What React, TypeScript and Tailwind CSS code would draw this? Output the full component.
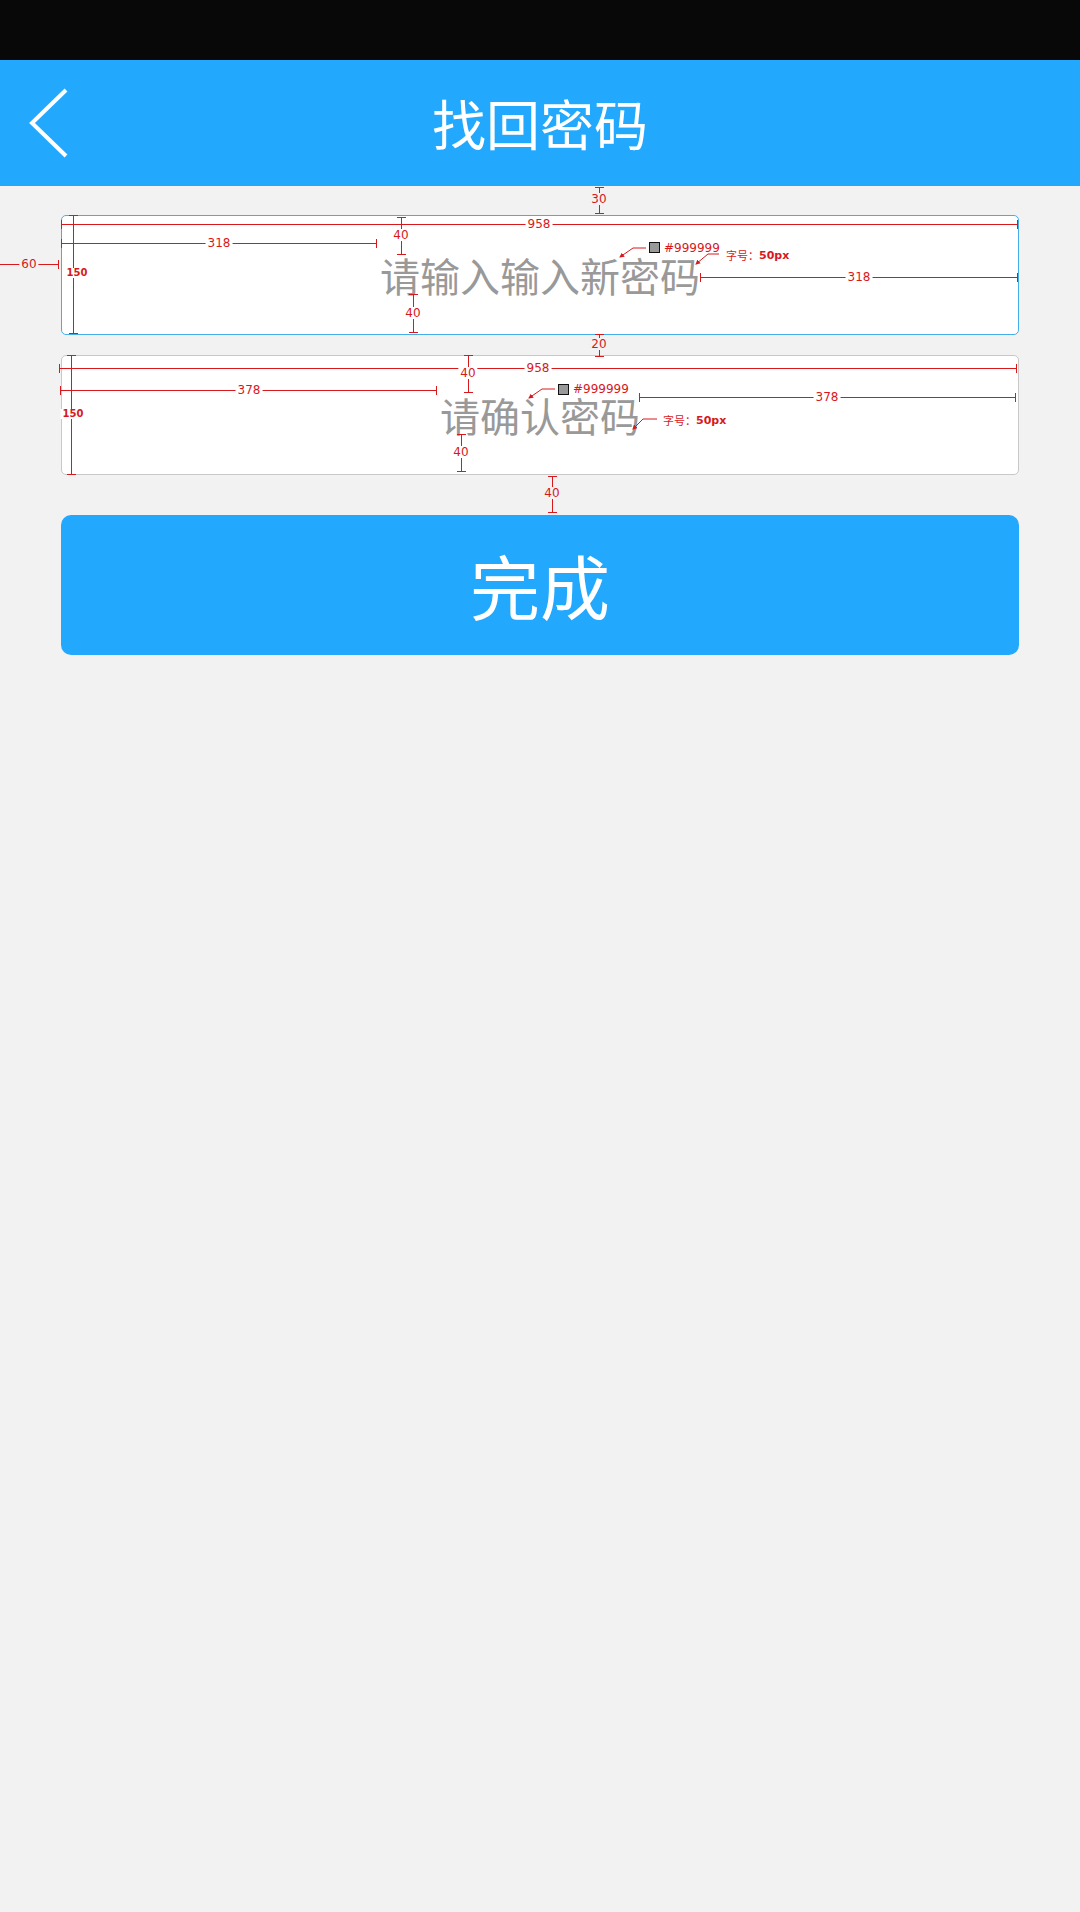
import React from "react";

const RED = "#d7191c";

type Dim = {
  dir: "h" | "v";
  at: number; // y for horizontal, x for vertical
  a: number;
  b: number;
  label: string;
  lx: number;
  ly: number;
  bg: string;
  bold?: boolean;
  startTick?: boolean;
};

const dims: Dim[] = [
  // first field
  { dir: "v", at: 599, a: 187, b: 214, label: "30", lx: 599, ly: 199, bg: "bg-[#f2f2f2]" },
  { dir: "h", at: 224, a: 61, b: 1018, label: "958", lx: 539, ly: 224, bg: "bg-white" },
  { dir: "v", at: 401, a: 217, b: 255, label: "40", lx: 401, ly: 235, bg: "bg-white" },
  { dir: "h", at: 243, a: 61, b: 377, label: "318", lx: 219, ly: 243, bg: "bg-white" },
  { dir: "v", at: 413, a: 294, b: 333, label: "40", lx: 413, ly: 313, bg: "bg-white" },
  { dir: "h", at: 264, a: -10, b: 59, label: "60", lx: 29, ly: 264, bg: "bg-[#f2f2f2]", startTick: false },
  { dir: "v", at: 73, a: 215, b: 334, label: "150", lx: 77, ly: 273, bg: "bg-white", bold: true },
  { dir: "h", at: 277, a: 700, b: 1018, label: "318", lx: 859, ly: 277, bg: "bg-white" },
  { dir: "v", at: 599, a: 334, b: 357, label: "20", lx: 599, ly: 344, bg: "bg-[#f2f2f2]" },
  // second field
  { dir: "h", at: 368, a: 59, b: 1017, label: "958", lx: 538, ly: 368, bg: "bg-white" },
  { dir: "v", at: 468, a: 355, b: 393, label: "40", lx: 468, ly: 373, bg: "bg-white" },
  { dir: "h", at: 390, a: 60, b: 437, label: "378", lx: 249, ly: 390, bg: "bg-white" },
  { dir: "v", at: 461, a: 434, b: 472, label: "40", lx: 461, ly: 452, bg: "bg-white" },
  { dir: "v", at: 71, a: 355, b: 475, label: "150", lx: 73, ly: 414, bg: "bg-white", bold: true },
  { dir: "h", at: 397, a: 639, b: 1016, label: "378", lx: 827, ly: 397, bg: "bg-white" },
  { dir: "v", at: 552, a: 476, b: 513, label: "40", lx: 552, ly: 493, bg: "bg-[#f2f2f2]" },
];

type Callout = {
  sx: number; sy: number; // swatch top-left
  tx: number; ty: number; // text "#999999"
  pts: string; // leader for colour
  fx: number; fy: number; // font-size note
  fpts: string;
};

const callouts: Callout[] = [
  {
    sx: 649, sy: 242, tx: 664, ty: 248, pts: "646,248 633,248 620,257",
    fx: 726, fy: 255, fpts: "719,254 708,254 696,264",
  },
  {
    sx: 558, sy: 384, tx: 573, ty: 389, pts: "555,389 542,389 529,398",
    fx: 663, fy: 420, fpts: "657,419 643,419 633,429",
  },
];

function Annotations() {
  return (
    <div className="pointer-events-none absolute inset-0 font-['DejaVu_Sans',sans-serif]">
      <svg className="absolute left-0 top-0" width={1080} height={700}>
        <defs>
          <marker id="arr" viewBox="0 0 10 10" refX="8" refY="5" markerWidth="5" markerHeight="5" orient="auto">
            <path d="M0 0 L10 5 L0 10 z" fill={RED} />
          </marker>
        </defs>
        {dims.map((d, i) =>
          d.dir === "h" ? (
            <g key={i} stroke={RED} strokeWidth={1}>
              <line x1={d.a} y1={d.at + 0.5} x2={d.b} y2={d.at + 0.5} />
              {d.startTick !== false && <line x1={d.a + 0.5} y1={d.at - 4} x2={d.a + 0.5} y2={d.at + 5} />}
              <line x1={d.b - 0.5} y1={d.at - 4} x2={d.b - 0.5} y2={d.at + 5} />
            </g>
          ) : (
            <g key={i} stroke={RED} strokeWidth={1}>
              <line x1={d.at + 0.5} y1={d.a} x2={d.at + 0.5} y2={d.b} />
              <line x1={d.at - 4} y1={d.a + 0.5} x2={d.at + 5} y2={d.a + 0.5} />
              <line x1={d.at - 4} y1={d.b - 0.5} x2={d.at + 5} y2={d.b - 0.5} />
            </g>
          )
        )}
        {callouts.map((c, i) => (
          <g key={i} fill="none" stroke={RED} strokeWidth={1}>
            <polyline points={c.pts} markerEnd="url(#arr)" />
            <polyline points={c.fpts} markerEnd="url(#arr)" />
            <rect x={c.sx + 0.5} y={c.sy + 0.5} width={10} height={10} fill="#999999" stroke="#111111" />
          </g>
        ))}
      </svg>
      {dims.map((d, i) => (
        <div
          key={i}
          className={`absolute -translate-x-1/2 -translate-y-1/2 px-[2px] leading-none text-[#d7191c] ${d.bg} ${
            d.bold ? "text-[10px] font-bold" : "text-[12px]"
          }`}
          style={{ left: d.lx, top: d.ly }}
        >
          {d.label}
        </div>
      ))}
      {callouts.map((c, i) => (
        <React.Fragment key={i}>
          <div className="absolute -translate-y-1/2 text-[12px] leading-none text-[#d7191c]" style={{ left: c.tx, top: c.ty }}>
            #999999
          </div>
          <div
            className="absolute flex -translate-y-1/2 items-center text-[11px] leading-none text-[#d7191c]"
            style={{ left: c.fx, top: c.fy }}
          >
            <span className="font-['Noto_Sans_CJK_SC',sans-serif]">字号：</span>
            <span className="font-bold">50px</span>
          </div>
        </React.Fragment>
      ))}
    </div>
  );
}

export default function App() {
  return (
    <div className="relative min-h-[1912px] bg-[#f2f2f2] font-['Noto_Sans_CJK_SC','Noto_Sans',sans-serif]">
      <div className="h-[60px] bg-[#080808]" />
      <header className="grid h-[126px] grid-cols-[120px_1fr_120px] items-center bg-[#22a9fe]">
        <button className="flex h-full items-center pl-[29px]">
          <svg width="42" height="70" viewBox="0 0 42 70">
            <polyline points="37,2 3,35 37,68" fill="none" stroke="#ffffff" strokeWidth={4} />
          </svg>
        </button>
        <h1 className="text-center text-[54px] font-normal leading-none text-white">找回密码</h1>
        <div />
      </header>
      <main className="flex flex-col px-[61px] pt-[29px]">
        <div className="flex h-[120px] items-center rounded-[5px] border border-[#45aee8] bg-white">
          <input
            className="w-full bg-transparent text-center text-[40px] leading-none text-[#999999] outline-none placeholder:text-[#999999]"
            placeholder="请输入输入新密码"
          />
        </div>
        <div className="mt-[20px] flex h-[120px] items-center rounded-[5px] border border-[#c8c8c8] bg-white">
          <input
            className="w-full bg-transparent text-center text-[40px] leading-none text-[#999999] outline-none placeholder:text-[#999999]"
            placeholder="请确认密码"
          />
        </div>
        <button className="mt-[40px] flex h-[140px] items-center justify-center rounded-[10px] bg-[#22a9fe] text-[70px] leading-none text-white">
          完成
        </button>
      </main>
      <Annotations />
    </div>
  );
}
